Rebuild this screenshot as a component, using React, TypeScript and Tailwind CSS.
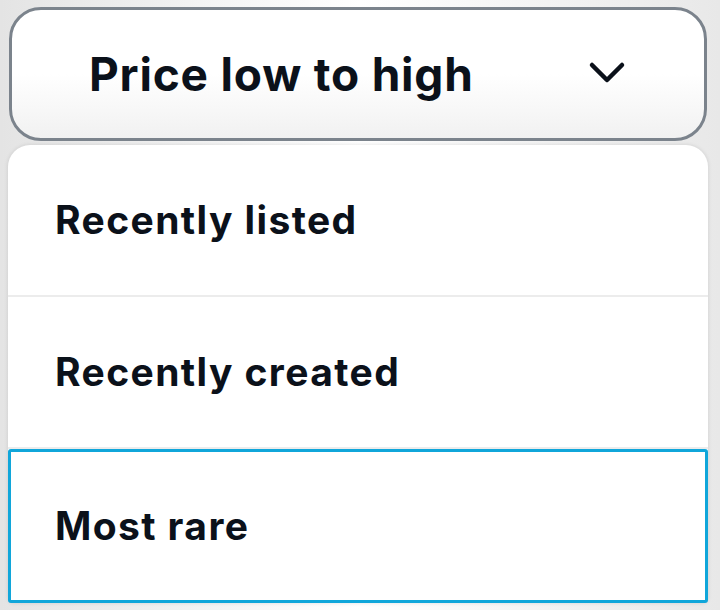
const options = ["Recently listed", "Recently created", "Most rare"]

export default function App() {
  const active = 2
  return (
    <div className="w-[720px] h-[610px] bg-gradient-to-r from-[#e4e4e4] via-white to-[#e8e8e8] px-[8px] pt-[7px] overflow-hidden" style={{ fontFamily: "Inter, 'Noto Sans', sans-serif" }}>
      <button className="w-[698px] h-[134px] ml-[1px] flex items-center justify-between pl-[77px] pr-[78px] rounded-[32px] border-[3px] border-[#7b838c] bg-gradient-to-b from-white via-white to-[#f1f1f1] text-[#0b111a]">
        <span className="text-[46px] font-bold tracking-[0.8px]">Price low to high</span>
        <svg width="38" height="24" viewBox="0 0 38 24" fill="none" className="mt-[-4px]">
          <polyline points="4,5 19,20 34,5" stroke="#0b111a" strokeWidth="4.5" strokeLinecap="round" strokeLinejoin="round" />
        </svg>
      </button>
      <div className="mt-[4px] w-[700px] bg-white rounded-t-[22px] rounded-b-[6px] shadow-[0_0_4px_rgba(0,0,0,0.12)]">
        {options.map((o, i) => (
          <div
            key={o}
            className={
              i === active
                ? "h-[154px] flex items-center pl-[44px] border-[3px] border-[#10a6da] rounded-[3px]"
                : "h-[152px] flex items-center pl-[47px] border-b-2 border-[#ececec]"
            }
          >
            <span className="text-[39px] font-bold text-[#0b111a] tracking-[1.4px]">{o}</span>
          </div>
        ))}
      </div>
    </div>
  )
}
